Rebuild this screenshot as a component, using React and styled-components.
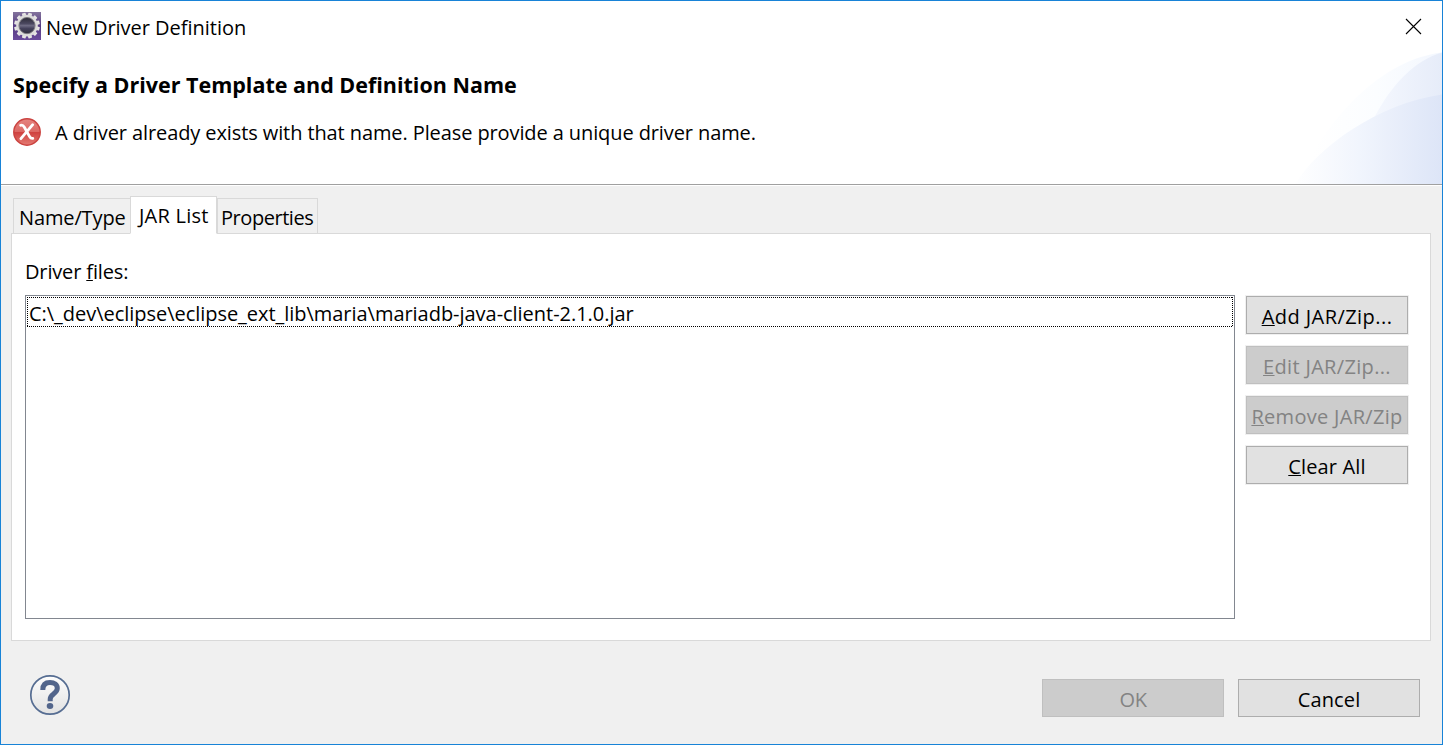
import React from 'react';
import styled, { createGlobalStyle } from 'styled-components';

const GlobalStyle = createGlobalStyle`
  * { box-sizing: border-box; }
  body {
    margin: 0;
    font: 20px/27px "Open Sans", "Noto Sans", sans-serif;
    color: #000;
  }
`;

const Dialog = styled.div`
  display: flex;
  flex-direction: column;
  width: 1443px;
  height: 745px;
  border: 1px solid #1883d7;
  background: #f0f0f0;
  overflow: hidden;
`;

const TitleBar = styled.div`
  display: flex;
  align-items: flex-start;
  height: 51px;
  padding: 11px 20px 0 12px;
  background: #fff;
`;

const Title = styled.div`
  flex: 1;
  margin: 2px 0 0 5px;
  letter-spacing: -0.02px;
`;

const CloseButton = styled.button`
  display: flex;
  padding: 0;
  margin-top: 6px;
  border: 0;
  background: none;
`;

const Header = styled.div`
  display: flex;
  justify-content: space-between;
  height: 134px;
  padding-left: 12px;
  background: #fff;
  border-bottom: 1px solid #fff;
  box-shadow: inset 0 -1px 0 #a0a0a0;
`;

const HeaderText = styled.div`
  padding-top: 17px;
`;

const Heading = styled.h1`
  margin: 0;
  font-size: 21.5px;
  line-height: 31px;
  font-weight: 700;
`;

const Message = styled.div`
  display: flex;
  align-items: flex-start;
  gap: 14px;
  margin-top: 19px;
  letter-spacing: -0.1px;

  svg { margin-top: -1px; }
`;

const TabStrip = styled.div`
  display: flex;
  align-items: flex-end;
  height: 48px;
  margin-bottom: -1px;
  padding-left: 12px;
  position: relative;
`;

const Tab = styled.div`
  width: ${(p) => p.$width}px;
  height: ${(p) => (p.$active ? 38 : 36)}px;
  padding: 5px 0 0 ${(p) => p.$pad}px;
  margin-right: ${(p) => (p.$active ? 0 : -1)}px;
  border: 1px solid #d9d9d9;
  border-bottom-color: ${(p) => (p.$active ? '#fff' : '#d9d9d9')};
  background: ${(p) => (p.$active ? '#fff' : '#f0f0f0')};
  letter-spacing: ${(p) => p.$spacing}px;
  white-space: nowrap;
`;

const Panel = styled.div`
  display: flex;
  flex-direction: column;
  height: 408px;
  margin: 0 11px 0 10px;
  padding: 24px 22px 21px 13px;
  border: 1px solid #d9d9d9;
  background: #fff;
`;

const Label = styled.div`
  height: 37px;
  letter-spacing: -0.15px;
`;

const Mnemonic = styled.span`
  text-decoration: underline;
  text-decoration-thickness: 1px;
  text-underline-offset: 1px;
  text-decoration-skip-ink: none;
`;

const Files = styled.div`
  display: flex;
  gap: 11px;
`;

const FileList = styled.div`
  width: 1210px;
  height: 324px;
  padding: 1px;
  border: 1px solid #828790;
`;

const FileItem = styled.div`
  position: relative;
  height: 30px;
  padding: 3px 0 0 2px;
  letter-spacing: -0.034px;

  svg { position: absolute; left: 0; top: 0; }
`;

const ButtonColumn = styled.div`
  display: flex;
  flex-direction: column;
  gap: 12px;
  padding-top: 1px;
`;

const Button = styled.button`
  width: ${(p) => p.$width || 162}px;
  height: 38px;
  padding: 3px 0 0;
  border: 1px solid #adadad;
  background: #e1e1e1;
  color: #000;
  font: inherit;
  letter-spacing: ${(p) => p.$spacing || 0}px;
  white-space: nowrap;
  box-shadow: 0 0 0 1px #f0f0f0;

  &:disabled {
    border-color: #bfbfbf;
    background: #ccc;
    color: #838383;
  }
`;

const Footer = styled.div`
  display: flex;
  gap: 14px;
  padding: 38px 22px 0 28px;
`;

const HelpButton = styled.button`
  display: flex;
  margin: -5px auto 0 0;
  padding: 0;
  border: 0;
  background: none;
`;

const TEETH = Array.from({ length: 12 }, (_, i) => i * 30 + 15);

function GearIcon() {
  return (
    <svg width="28" height="28" viewBox="0 0 28 28">
      <defs>
        <linearGradient id="gearBg" x1="0" y1="0" x2="0" y2="1">
          <stop offset="0" stopColor="#83739c" />
          <stop offset=".5" stopColor="#553b82" />
          <stop offset="1" stopColor="#6b4b9c" />
        </linearGradient>
        <linearGradient id="gearCore" x1="0" y1="0" x2="0" y2="1">
          <stop offset="0" stopColor="#25242e" />
          <stop offset=".4" stopColor="#4b4860" />
          <stop offset=".5" stopColor="#6e6b83" />
          <stop offset=".65" stopColor="#45425c" />
          <stop offset="1" stopColor="#292836" />
        </linearGradient>
      </defs>
      <rect width="28" height="28" fill="url(#gearBg)" />
      {TEETH.map((a) => (
        <rect key={a} x="12.1" y="0.7" width="3.8" height="5" rx=".6" fill="#e6e5e4" transform={`rotate(${a} 14 13.6)`} />
      ))}
      <circle cx="14" cy="13.6" r="9.4" fill="url(#gearCore)" stroke="#dddcdb" strokeWidth="2.8" />
      <circle cx="14" cy="13.6" r="8.1" fill="none" stroke="#77747c" strokeWidth=".9" />
    </svg>
  );
}

function ErrorIcon() {
  return (
    <svg width="28" height="28" viewBox="0 0 28 28">
      <defs>
        <linearGradient id="errorFill" x1="0" y1="0" x2="0" y2="1">
          <stop offset="0" stopColor="#e58580" />
          <stop offset=".48" stopColor="#dc6965" />
          <stop offset=".52" stopColor="#cf4240" />
          <stop offset="1" stopColor="#e47c74" />
        </linearGradient>
      </defs>
      <circle cx="14" cy="14" r="13.2" fill="url(#errorFill)" stroke="#cb4340" strokeWidth="1.5" />
      <path d="M7.6 7.3c1.900-.4 2.900.3 3.800 1.900l5.200 9.500c.8 1.400 1.700 2 3.200 1.700M19.700 6.700 7.900 20.700" fill="none" stroke="#fff" strokeWidth="2.800" strokeLinecap="round" />
    </svg>
  );
}

function Swoosh() {
  return (
    <svg width="150" height="132" viewBox="0 0 150 132">
      <defs>
        <linearGradient id="outer" gradientUnits="userSpaceOnUse" x1="20" y1="0" x2="150" y2="0">
          <stop offset="0" stopColor="#fff" />
          <stop offset=".5" stopColor="#fbfdff" />
          <stop offset="1" stopColor="#f3f7fe" />
        </linearGradient>
        <linearGradient id="middle" gradientUnits="userSpaceOnUse" x1="80" y1="0" x2="150" y2="0">
          <stop offset="0" stopColor="#f5f8fe" />
          <stop offset="1" stopColor="#e6ecf9" />
        </linearGradient>
        <linearGradient id="lower" gradientUnits="userSpaceOnUse" x1="0" y1="0" x2="150" y2="0">
          <stop offset="0" stopColor="#fff" />
          <stop offset=".45" stopColor="#f1f5fd" />
          <stop offset="1" stopColor="#dde5f7" />
        </linearGradient>
      </defs>
      <path d="M3 132C36 66 88 8 150 .5V132Z" fill="url(#outer)" />
      <path d="M82 66C100 32 122 9 150 .5V66Z" fill="url(#middle)" />
      <path d="M3 132C26 95 85 52 150 42.500V132Z" fill="url(#lower)" />
    </svg>
  );
}

function HelpIcon() {
  return (
    <svg width="42" height="42" viewBox="0 0 42 42">
      <defs>
        <linearGradient id="helpFill" x1="0" y1="0" x2="0" y2="1">
          <stop offset="0" stopColor="#fdfdfd" />
          <stop offset="1" stopColor="#e2e2e2" />
        </linearGradient>
      </defs>
      <circle cx="21" cy="21" r="19.200" fill="url(#helpFill)" stroke="#566d92" strokeWidth="1.700" />
      <path d="M13.800 15.900C13.800 11 16.500 8.600 21 8.600c4.300 0 7.300 2.100 7.300 5.700 0 2.900-1.800 4.200-4 5.900-2.300 1.700-3.100 2.800-3.100 5.100v1.900" fill="none" stroke="#52658b" strokeWidth="5" />
      <ellipse cx="21" cy="32" rx="3.300" ry="2.900" fill="#52658b" />
    </svg>
  );
}

export default function App() {
  return (
    <>
      <GlobalStyle />
      <Dialog>
        <TitleBar>
          <GearIcon />
          <Title>New Driver Definition</Title>
          <CloseButton aria-label="Close">
            <svg width="17" height="17" viewBox="0 0 17 17">
              <path d="M1 1 16 16M16 1 1 16" stroke="#000" strokeWidth="1.100" />
            </svg>
          </CloseButton>
        </TitleBar>
        <Header>
          <HeaderText>
            <Heading>Specify a Driver Template and Definition Name</Heading>
            <Message>
              <ErrorIcon />
              A driver already exists with that name. Please provide a unique driver name.
            </Message>
          </HeaderText>
          <Swoosh />
        </Header>
        <TabStrip>
          <Tab $width={118} $pad={5} $spacing={-0.128}>Name/Type</Tab>
          <Tab $active $width={87} $pad={8} $spacing={0.25}>JAR List</Tab>
          <Tab $width={101} $pad={3} $spacing={-0.45}>Properties</Tab>
        </TabStrip>
        <Panel>
          <Label>Driver <Mnemonic>f</Mnemonic>iles:</Label>
          <Files>
            <FileList>
              <FileItem>
                <svg width="1206" height="30" fill="none" stroke="#000" strokeDasharray="1 1">
                  <path d="M0 .5H1206M0 29.500H1206M.5 0V30M1205.500 0V30" />
                </svg>
                C:\_dev\eclipse\eclipse_ext_lib\maria\mariadb-java-client-2.1.0.jar
              </FileItem>
            </FileList>
            <ButtonColumn>
              <Button $spacing={0.44}><Mnemonic>A</Mnemonic>dd JAR/Zip...</Button>
              <Button disabled $spacing={0.33}><Mnemonic>E</Mnemonic>dit JAR/Zip...</Button>
              <Button disabled $spacing={0.3}><Mnemonic>R</Mnemonic>emove JAR/Zip</Button>
              <Button $spacing={0.15}><Mnemonic>C</Mnemonic>lear All</Button>
            </ButtonColumn>
          </Files>
        </Panel>
        <Footer>
          <HelpButton aria-label="Help"><HelpIcon /></HelpButton>
          <Button disabled $width={182} $spacing={-0.5}>OK</Button>
          <Button $width={182} $spacing={0.14}>Cancel</Button>
        </Footer>
      </Dialog>
    </>
  );
}
